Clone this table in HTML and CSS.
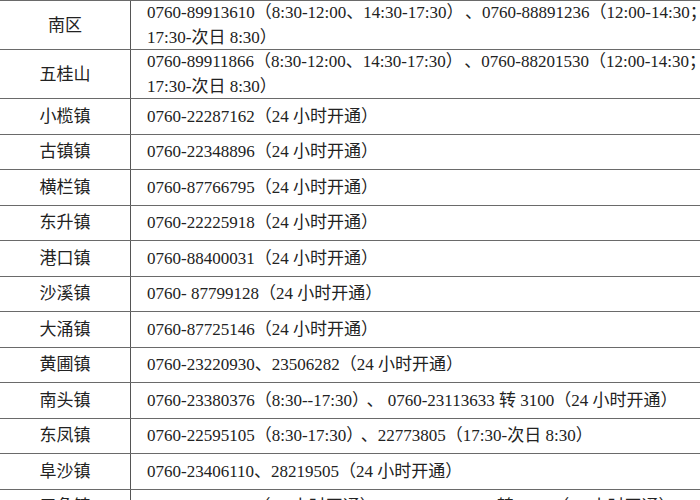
FILE: index.html
```html
<!DOCTYPE html>
<html lang="zh-CN">
<head>
<meta charset="utf-8">
<title>联系电话</title>
<link rel="stylesheet" href="styles.css">
</head>
<body>
<div class="table">
  <div class="row tall">
    <div class="name">南区</div>
    <div class="info">0760-89913610（8:30-12:00、14:30-17:30）<span class="gap">、</span>0760-88891236（12:00-14:30；<br>17:30-次日 8:30）</div>
  </div>
  <div class="row tall">
    <div class="name">五桂山</div>
    <div class="info">0760-89911866（8:30-12:00、14:30-17:30）<span class="gap">、</span>0760-88201530（12:00-14:30；<br>17:30-次日 8:30）</div>
  </div>
  <div class="row">
    <div class="name">小榄镇</div>
    <div class="info">0760-22287162（24 小时开通）</div>
  </div>
  <div class="row">
    <div class="name">古镇镇</div>
    <div class="info">0760-22348896（24 小时开通）</div>
  </div>
  <div class="row">
    <div class="name">横栏镇</div>
    <div class="info">0760-87766795（24 小时开通）</div>
  </div>
  <div class="row">
    <div class="name">东升镇</div>
    <div class="info">0760-22225918（24 小时开通）</div>
  </div>
  <div class="row">
    <div class="name">港口镇</div>
    <div class="info">0760-88400031（24 小时开通）</div>
  </div>
  <div class="row">
    <div class="name">沙溪镇</div>
    <div class="info">0760- 87799128（24 小时开通）</div>
  </div>
  <div class="row">
    <div class="name">大涌镇</div>
    <div class="info">0760-87725146（24 小时开通）</div>
  </div>
  <div class="row">
    <div class="name">黄圃镇</div>
    <div class="info">0760-23220930、23506282（24 小时开通）</div>
  </div>
  <div class="row">
    <div class="name">南头镇</div>
    <div class="info">0760-23380376（8:30--17:30）<span class="gap-sm">、</span> 0760-23113633 转 3100（24 小时开通）</div>
  </div>
  <div class="row">
    <div class="name">东凤镇</div>
    <div class="info">0760-22595105（8:30-17:30）<span class="gap-sm">、</span>22773805（17:30-次日 8:30）</div>
  </div>
  <div class="row">
    <div class="name">阜沙镇</div>
    <div class="info">0760-23406110、28219505（24 小时开通）</div>
  </div>
  <div class="row">
    <div class="name">三角镇</div>
    <div class="info">0760-85401110（24 小时开通）、0760-85403333 转 8001（24 小时开通）</div>
  </div>
</div>
</body>
</html>
```

FILE: styles.css
```css
html, body {
  margin: 0;
  padding: 0;
  background: #ffffff;
}

body {
  width: 700px;
  height: 500px;
  overflow: hidden;
  font-family: "Liberation Serif", "Noto Sans CJK SC", serif;
  font-size: 17px;
  line-height: 25px;
  color: #222222;
}

.table {
  width: 760px;
  border-top: 1px solid #6a6a6a;
}

.row {
  display: flex;
  height: 35.5px;
  box-sizing: border-box;
  border-bottom: 1px solid #6a6a6a;
}

.row.tall {
  height: 49px;
}

.name {
  flex: 0 0 131px;
  box-sizing: border-box;
  border-right: 1px solid #555555;
  display: flex;
  align-items: center;
  justify-content: center;
}

.info {
  flex: 1;
  padding-left: 16px;
  display: block;
  align-self: center;
  white-space: nowrap;
}

.gap {
  margin-left: 10px;
}

.gap-sm {
  margin-left: 6px;
}
```
